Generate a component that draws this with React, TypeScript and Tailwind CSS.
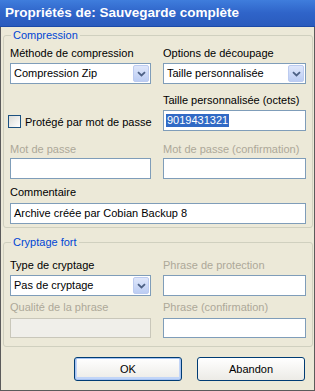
import React from "react";

const font = { fontFamily: '"Liberation Sans", Arial, sans-serif' };

const ComboArrow = () => (
  <div className="h-[17px] w-[16px] rounded-[2px] border border-[#bccbf0] bg-gradient-to-b from-[#dfe7fb] to-[#bccdf3] flex items-center justify-center">
    <svg width="9" height="6" viewBox="0 0 9 6">
      <path d="M1 1.2 L4.5 4.5 L8 1.2" fill="none" stroke="#4d6185" strokeWidth="1.8" />
    </svg>
  </div>
);

const Combo = ({ value }: { value: string }) => (
  <div className="h-[21px] border border-[#7f9db9] bg-white flex items-center justify-between pl-[3px] pr-[1px]">
    <span className="text-[11px] text-black">{value}</span>
    <ComboArrow />
  </div>
);

const Field = ({ value, disabled }: { value?: string; disabled?: boolean }) => (
  <div
    className={`h-[21px] border flex items-center px-[3px] text-[11px] ${
      disabled ? "border-[#c9c7ba] bg-[#f2f1ed]" : "border-[#7f9db9] bg-white"
    }`}
  >
    {value}
  </div>
);

const Label = ({ children, muted }: { children: React.ReactNode; muted?: boolean }) => (
  <div className={`text-[11px] leading-[13px] whitespace-nowrap ${muted ? "text-[#aca899]" : "text-black"}`}>{children}</div>
);

export default function App() {
  return (
    <div style={font} className="w-[315px] h-[391px] bg-[#ece9d8] border-x border-b border-[#5b5b5b] flex flex-col">
      {/* title bar */}
      <div className="h-[27px] -mx-px bg-gradient-to-b from-[#3f7ddc] via-[#2f64c9] to-[#2a5bbd] border-b border-[#1b4aa8] flex items-center pl-[5px]">
        <span className="text-white font-bold text-[13.5px]">Propriétés de: Sauvegarde complète</span>
      </div>

      <div className="flex-1 flex flex-col px-[2px] pt-[2px]">
        {/* Compression */}
        <fieldset className="border border-[#d0d0bf] rounded-[3px] px-[6px] pb-[7px] h-[199px]">
          <legend className="text-[11px] leading-[13px] text-[#0046d5] px-[2px] ml-[1px]">Compression</legend>
          <div className="grid grid-cols-[141px_143px] gap-x-[12px] mt-[5px]">
            <div>
              <Label>Méthode de compression</Label>
              <div className="mt-[3px]">
                <Combo value="Compression Zip" />
              </div>
            </div>
            <div>
              <Label>Options de découpage</Label>
              <div className="mt-[3px]">
                <Combo value="Taille personnalisée" />
              </div>
            </div>

            <div className="flex items-end pb-[1px]">
              <label className="flex items-center gap-[4px] -ml-[2px] whitespace-nowrap">
                <span className="w-[13px] h-[13px] border border-[#1c5180] bg-gradient-to-br from-[#dcdcd7] to-white" />
                <span className="text-[11px]">Protégé par mot de passe</span>
              </label>
            </div>
            <div className="mt-[10px]">
              <Label>Taille personnalisée (octets)</Label>
              <div className="mt-[3px] h-[21px] border border-[#7f9db9] bg-white flex items-center px-[2px]">
                <span className="text-[11px] leading-[13px] bg-[#316ac5] text-white px-[1px]">9019431321</span>
              </div>
            </div>

            <div className="mt-[12px]">
              <Label muted>Mot de passe</Label>
              <div className="mt-[2px]">
                <Field />
              </div>
            </div>
            <div className="mt-[12px]">
              <Label muted>Mot de passe (confirmation)</Label>
              <div className="mt-[2px]">
                <Field />
              </div>
            </div>

            <div className="col-span-2 mt-[7px]">
              <Label>Commentaire</Label>
              <div className="mt-[4px]">
                <Field value="Archive créée par Cobian Backup 8" />
              </div>
            </div>
          </div>
        </fieldset>

        {/* Cryptage fort */}
        <fieldset className="mt-[8px] border border-[#d0d0bf] rounded-[3px] px-[6px] pb-[8px]">
          <legend className="text-[11px] leading-[13px] text-[#0046d5] px-[2px] ml-[1px]">Cryptage fort</legend>
          <div className="grid grid-cols-[141px_143px] gap-x-[12px] mt-[10px]">
            <div>
              <Label>Type de cryptage</Label>
              <div className="mt-[3px]">
                <Combo value="Pas de cryptage" />
              </div>
            </div>
            <div>
              <Label muted>Phrase de protection</Label>
              <div className="mt-[3px]">
                <Field />
              </div>
            </div>
            <div className="mt-[5px]">
              <Label muted>Qualité de la phrase</Label>
              <div className="mt-[4px] h-[20px] border border-[#c9c7ba] bg-[#f0efea]" />
            </div>
            <div className="mt-[5px]">
              <Label muted>Phrase (confirmation)</Label>
              <div className="mt-[4px]">
                <div className="h-[20px] border border-[#7f9db9] bg-white" />
              </div>
            </div>
          </div>
        </fieldset>

        {/* buttons */}
        <div className="flex justify-end gap-[15px] pr-[7px] mt-[10px]">
          <button className="w-[108px] h-[24px] rounded-[3px] border border-[#003c74] bg-gradient-to-b from-white to-[#ecebe6] text-[11px] text-black shadow-[inset_0_0_0_1px_#a6c3f2,inset_0_-1px_0_2px_#c2d5f7]">
            OK
          </button>
          <button className="w-[108px] h-[24px] rounded-[3px] border border-[#003c74] bg-gradient-to-b from-white to-[#ecebe6] text-[11px] text-black">
            Abandon
          </button>
        </div>
      </div>
    </div>
  );
}
